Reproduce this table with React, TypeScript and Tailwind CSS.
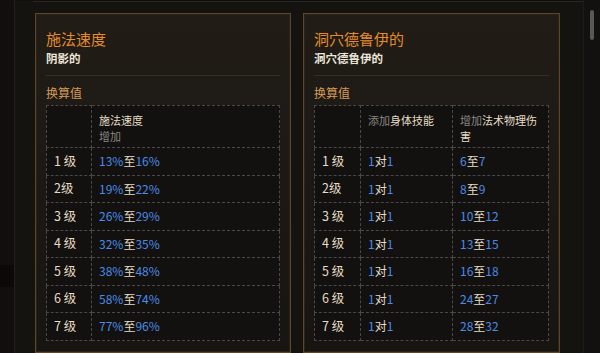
import React from "react";

type Part = { t: string; c: "b" | "w" };
type Row = { lv: string; cells: Part[][] };

const font = { fontFamily: '"Noto Sans CJK SC", "Noto Sans", sans-serif' };

const leftRows: Row[] = [
  ["1 级", "13%", "16%"],
  ["2级", "19%", "22%"],
  ["3 级", "26%", "29%"],
  ["4 级", "32%", "35%"],
  ["5 级", "38%", "48%"],
  ["6 级", "58%", "74%"],
  ["7 级", "77%", "96%"],
].map(([lv, a, b]) => ({
  lv,
  cells: [[{ t: a, c: "b" }, { t: "至", c: "w" }, { t: b, c: "b" }]],
}));

const rightRows: Row[] = [
  ["1 级", "6", "7"],
  ["2级", "8", "9"],
  ["3 级", "10", "12"],
  ["4 级", "13", "15"],
  ["5 级", "16", "18"],
  ["6 级", "24", "27"],
  ["7 级", "28", "32"],
].map(([lv, a, b]) => ({
  lv,
  cells: [
    [{ t: "1", c: "b" }, { t: "对", c: "w" }, { t: "1", c: "b" }],
    [{ t: a, c: "b" }, { t: "至", c: "w" }, { t: b, c: "b" }],
  ],
}));

function Value({ parts }: { parts: Part[] }) {
  return (
    <>
      {parts.map((p, i) => (
        <span key={i} className={p.c === "b" ? "text-[#4d8ae6]" : "text-[#e6dcc4]"}>
          {p.t}
        </span>
      ))}
    </>
  );
}

const cell = "border border-dashed border-[#4a4846]";

function Card({
  title,
  sub,
  head,
  rows,
  widths,
}: {
  title: string;
  sub: string;
  head: React.ReactNode[];
  rows: Row[];
  widths: string[];
}) {
  return (
    <div className="h-[340px] border border-[#5c4528] bg-gradient-to-b from-[#211c16] to-[#171512] px-[10px] pt-[15px] shadow-[inset_0_0_0_1px_#2b2218]">
      <div className="text-[15px] leading-[20px] text-[#e58c2c]">{title}</div>
      <div className="mt-[1px] text-[11.5px] font-bold leading-[16px] text-[#ece6da]">{sub}</div>
      <div className="mt-[9px] h-px bg-[#332d26]" />
      <div className="mt-[9px] text-[12px] leading-[16px] text-[#d69a55]">换算值</div>
      <table className="mt-[4px] w-full border-collapse bg-[#121110] text-[12px]">
        <thead>
          <tr className="h-[41px]">
            <th className={`${cell} ${widths[0]}`} />
            {head.map((h, i) => (
              <th
                key={i}
                className={`${cell} ${widths[i + 1]} pl-[7px] pr-[6px] pt-[6px] pb-[3px] text-left align-top text-[11px] font-normal leading-[16px]`}
              >
                {h}
              </th>
            ))}
          </tr>
        </thead>
        <tbody>
          {rows.map((r) => (
            <tr key={r.lv} className="h-[27.5px]">
              <td className={`${cell} pl-[7px] text-[12.5px] text-[#e6dcc4]`}>{r.lv}</td>
              {r.cells.map((c, i) => (
                <td key={i} className={`${cell} pl-[7px]`}>
                  <Value parts={c} />
                </td>
              ))}
            </tr>
          ))}
        </tbody>
      </table>
    </div>
  );
}

export default function App() {
  return (
    <div className="flex h-[353px] w-[600px] overflow-hidden bg-[#15130f]" style={font}>
      <div className="relative w-[15px] shrink-0 border-r border-[#23201c] bg-[#100f0d]">
        <div className="absolute left-0 top-[265px] h-[22px] w-[14px] bg-[#0a0908]" />
      </div>
      <div className="flex flex-1 flex-col">
        <div className="h-[6px] bg-[#0f0e0c]" />
        <div className="ml-[18px] h-px bg-[#2a2723]" />
        <div className="ml-[20px] flex gap-[12px] pt-[12px]">
          <div className="w-[256px]">
            <Card
              title="施法速度"
              sub="阴影的"
              widths={["w-[45px]", ""]}
              head={[
                <>
                  <div className="text-[#e6dcc4]">施法速度</div>
                  <div className="text-[#8a8680]">增加</div>
                </>,
              ]}
              rows={leftRows}
            />
          </div>
          <div className="w-[257px]">
            <Card
              title="洞穴德鲁伊的"
              sub="洞穴德鲁伊的"
              widths={["w-[46px]", "w-[92px]", ""]}
              head={[
                <>
                  <span className="text-[#8a8680]">添加</span>
                  <span className="text-[#e6dcc4]">身体技能</span>
                </>,
                <>
                  <span className="text-[#8a8680]">增加</span>
                  <span className="text-[#e6dcc4]">法术物理伤害</span>
                </>,
              ]}
              rows={rightRows}
            />
          </div>
        </div>
      </div>
      <div className="w-[17px] shrink-0 border-l border-[#1e1c19] bg-[#121110] pt-[10px]">
        <div className="ml-[6px] h-[30px] w-[4px] rounded-sm bg-[#5a5855]" />
      </div>
    </div>
  );
}
